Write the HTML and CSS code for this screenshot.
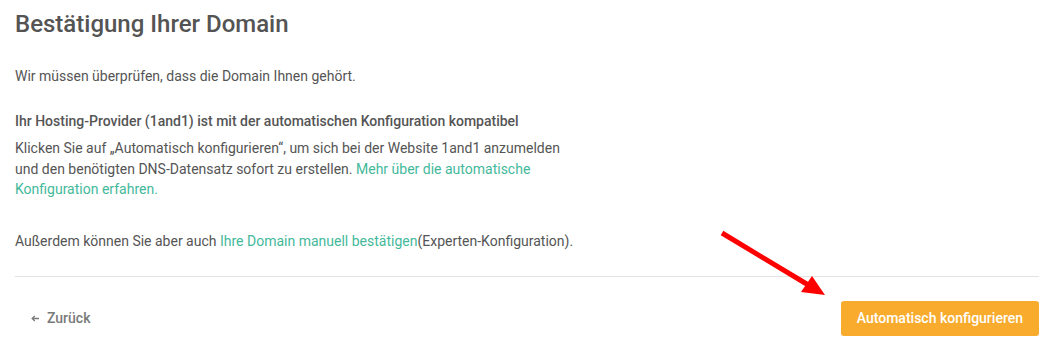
FILE: index.html
```html
<!DOCTYPE html>
<html lang="de">
<head>
<meta charset="utf-8">
<title>Bestätigung Ihrer Domain</title>
<link rel="stylesheet" href="styles.css">
</head>
<body>
<div class="page">
  <h1 class="title">Bestätigung Ihrer Domain</h1>
  <p class="intro">Wir müssen überprüfen, dass die Domain Ihnen gehört.</p>
  <p class="subtitle">Ihr Hosting-Provider (1and1) ist mit der automatischen Konfiguration kompatibel</p>
  <p class="text">Klicken Sie auf „Automatisch konfigurieren“, um sich bei der Website 1and1 anzumelden<br>und den benötigten DNS-Datensatz sofort zu erstellen. <a class="link" href="#">Mehr über die automatische<br>Konfiguration erfahren.</a></p>
  <p class="extra">Außerdem können Sie aber auch <a class="link" href="#">Ihre Domain manuell bestätigen</a>(Experten-Konfiguration).</p>
  <div class="divider"></div>
  <div class="footer">
    <a class="back" href="#"><svg class="back-arrow" width="8" height="7" viewBox="0 0 8 7"><path d="M8 3.5H1.5M3.8 1L1.2 3.5L3.8 6" fill="none" stroke="#7a7a7a" stroke-width="1.3"/></svg>Zurück</a>
    <button class="primary">Automatisch konfigurieren</button>
  </div>
  <svg class="annotation" width="120" height="80" viewBox="0 0 120 80">
    <line x1="8" y1="13" x2="96" y2="66" stroke="#ff0000" stroke-width="5" stroke-linecap="butt"/>
    <polygon points="111,75 87,72 98,56" fill="#ff0000"/>
  </svg>
</div>
</body>
</html>
```
FILE: styles.css
```css
html, body {
  margin: 0;
  padding: 0;
  background: #ffffff;
}
body {
  font-family: Roboto, "Liberation Sans", sans-serif;
  color: #555555;
  font-size: 14px;
}
.page {
  position: relative;
  padding: 9px 14px 0 15px;
}
.title {
  margin: 0;
  font-size: 24px;
  line-height: 30px;
  font-weight: 500;
  color: #545454;
}
.intro {
  margin: 27px 0 0;
  line-height: 20px;
}
.subtitle {
  margin: 25px 0 0;
  line-height: 20px;
  font-weight: 500;
}
.text {
  margin: 7px 0 0;
  line-height: 20.5px;
}
.link {
  color: #44b99b;
  text-decoration: none;
}
.extra {
  margin: 31px 0 0;
  line-height: 20px;
}
.divider {
  margin-top: 25px;
  height: 1px;
  background: #e3e3e3;
}
.footer {
  margin-top: 24px;
  display: flex;
  justify-content: space-between;
  align-items: center;
}
.back {
  margin-left: 16px;
  color: #7a7a7a;
  font-weight: 500;
  text-decoration: none;
  font-size: 14px;
  display: flex;
  align-items: center;
}
.back-arrow {
  margin-right: 8px;
}
.primary {
  font-family: Roboto, "Liberation Sans", sans-serif;
  background: #f8ab2c;
  color: #ffffff;
  border: none;
  border-radius: 3px;
  height: 35px;
  padding: 0 16px;
  font-size: 14px;
  font-weight: 500;
}
.annotation {
  position: absolute;
  left: 714px;
  top: 220px;
}
```
